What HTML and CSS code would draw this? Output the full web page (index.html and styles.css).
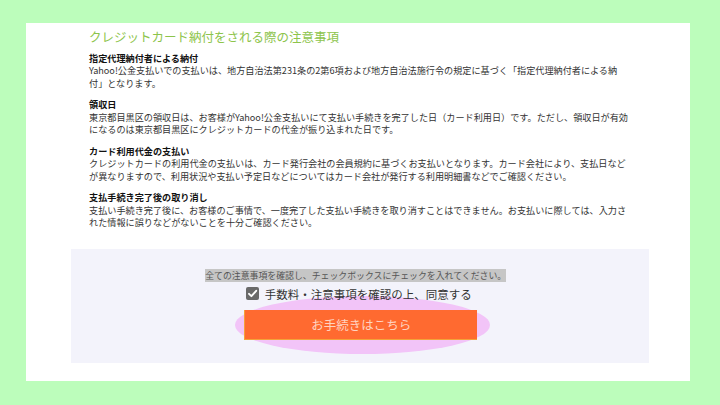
FILE: index.html
```html
<!DOCTYPE html>
<html lang="ja">
<head>
<meta charset="utf-8">
<link rel="stylesheet" href="styles.css">
</head>
<body>
<div class="panel">
  <div class="notes">
    <h2 class="title">クレジットカード納付をされる際の注意事項</h2>
    <div class="section">
      <h3>指定代理納付者による納付</h3>
      <p>Yahoo!公金支払いでの支払いは、地方自治法第231条の2第6項および地方自治法施行令の規定に基づく「指定代理納付者による納<br>付」となります。</p>
    </div>
    <div class="section">
      <h3>領収日</h3>
      <p>東京都目黒区の領収日は、お客様がYahoo!公金支払いにて支払い手続きを完了した日（カード利用日）です。ただし、領収日が有効<br>になるのは東京都目黒区にクレジットカードの代金が振り込まれた日です。</p>
    </div>
    <div class="section">
      <h3>カード利用代金の支払い</h3>
      <p>クレジットカードの利用代金の支払いは、カード発行会社の会員規約に基づくお支払いとなります。カード会社により、支払日など<br>が異なりますので、利用状況や支払い予定日などについてはカード会社が発行する利用明細書などでご確認ください。</p>
    </div>
    <div class="section">
      <h3>支払手続き完了後の取り消し</h3>
      <p>支払い手続き完了後に、お客様のご事情で、一度完了した支払い手続きを取り消すことはできません。お支払いに際しては、入力さ<br>れた情報に誤りなどがないことを十分ご確認ください。</p>
    </div>
  </div>
  <div class="agree">
    <div class="notice"><span>全ての注意事項を確認し、チェックボックスにチェックを入れてください。</span></div>
    <label class="check-row">
      <span class="checkbox"><svg width="13" height="13" viewBox="0 0 13 13"><path d="M3 6.8 L5.4 9.2 L10.2 3.8" fill="none" stroke="#fff" stroke-width="1.9" stroke-linecap="round" stroke-linejoin="round"/></svg></span>
      <span class="check-label">手数料・注意事項を確認の上、同意する</span>
    </label>
    <div class="btn-wrap">
      <button class="btn" type="button">お手続きはこちら</button>
    </div>
  </div>
</div>
</body>
</html>
```
FILE: styles.css
```css
html, body {
  margin: 0;
  padding: 0;
}
body {
  background: #bcfdbb;
  width: 720px;
  height: 405px;
  overflow: hidden;
  font-family: "Noto Sans CJK JP", "Noto Sans", sans-serif;
}
.panel {
  width: 664px;
  margin: 23px 0 0 26px;
  background: #fff;
  padding: 6px 0 18px;
}
.notes {
  margin-left: 63px;
  width: 560px;
}
.title {
  margin: 0 0 6.5px;
  font-size: 12.5px;
  line-height: 16px;
  font-weight: normal;
  color: #8dc44b;
}
.section {
  margin-bottom: 8.8px;
}
.section h3 {
  margin: 0;
  font-size: 9.15px;
  line-height: 12.6px;
  font-weight: bold;
  color: #111;
}
.section p {
  margin: 0;
  font-size: 9.15px;
  line-height: 12.6px;
  color: #333;
  white-space: nowrap;
}
.agree {
  position: relative;
  z-index: 0;
  width: 578px;
  height: 114px;
  margin: 19.5px 0 0 44.7px;
  background: #f3f3fb;
  padding-top: 21px;
  box-sizing: border-box;
}
.notice {
  text-align: center;
  padding-right: 8px;
  font-size: 8.9px;
  line-height: 12px;
  height: 12px;
  color: #555;
}
.notice span {
  background: #c6c6c6;
}
.check-row {
  display: flex;
  justify-content: center;
  align-items: center;
  gap: 6px;
  height: 16px;
  margin-top: 4px;
  padding-right: 2px;
}
.checkbox {
  width: 13px;
  height: 13px;
  border-radius: 2px;
  background: #6a6a6a;
  display: flex;
}
.check-label {
  font-size: 11.5px;
  line-height: 16px;
  color: #333;
}
.btn-wrap {
  position: relative;
  width: 233px;
  height: 30px;
  margin: 8px 0 0 173.5px;
}
.btn-wrap::before {
  content: "";
  position: absolute;
  left: -9px;
  right: -13px;
  top: -14px;
  bottom: -14px;
  border-radius: 50%;
  background: #f2c4f8;
  z-index: -1;
}
.btn {
  display: block;
  width: 100%;
  height: 100%;
  margin: 0;
  padding: 0;
  border: 0;
  border-left: 1px solid #f4a23a;
  border-bottom: 1px solid #f4a23a;
  background: #ff6a30;
  color: #ffd3c0;
  font-family: "Noto Sans CJK JP", "Noto Sans", sans-serif;
  font-size: 12.5px;
  line-height: 29px;
}
```
